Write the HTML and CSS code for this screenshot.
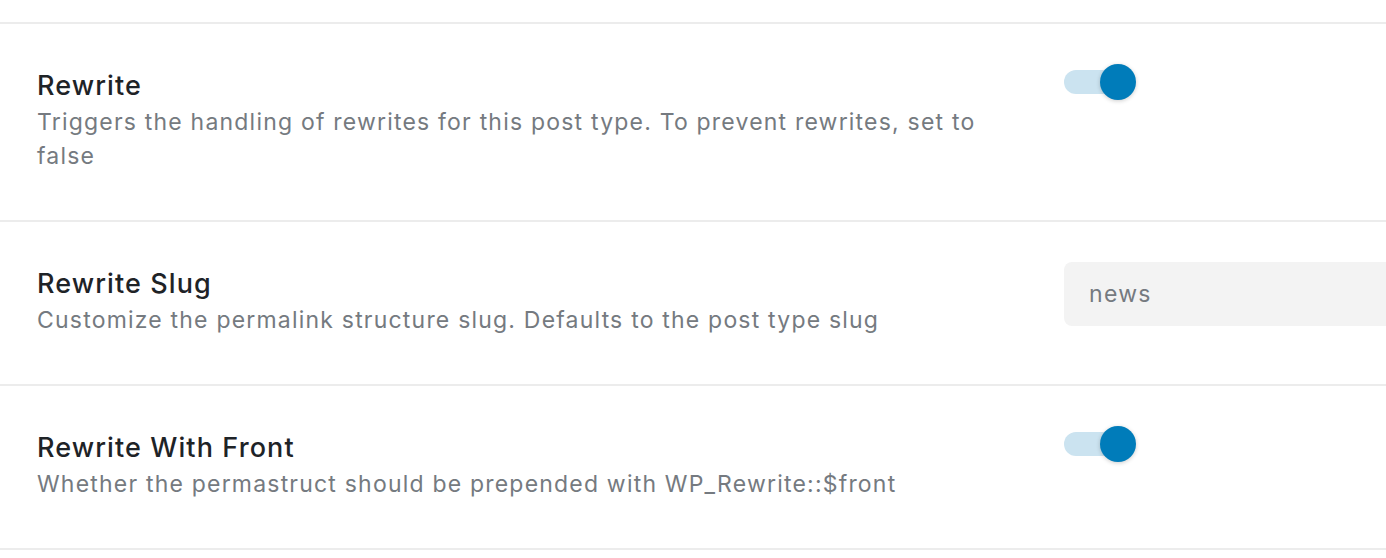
FILE: index.html
```html
<!DOCTYPE html>
<html lang="en">
<head>
    <meta charset="UTF-8">
    <meta name="viewport" content="width=device-width, initial-scale=1.0">
    <title>Post Type Settings</title>
    <link rel="stylesheet" href="styles.css">
</head>
<body>
    <div class="settings">
        <div class="row row-top"></div>
        <div class="row">
            <div class="info">
                <h3 class="title">Rewrite</h3>
                <p class="desc">Triggers the handling of rewrites for this post type. To prevent rewrites, set to false</p>
            </div>
            <div class="control">
                <label class="toggle">
                    <input type="checkbox" checked aria-label="Rewrite">
                    <span class="track"></span>
                    <span class="knob"></span>
                </label>
            </div>
        </div>
        <div class="row">
            <div class="info">
                <h3 class="title">Rewrite Slug</h3>
                <p class="desc">Customize the permalink structure slug. Defaults to the post type slug</p>
            </div>
            <div class="control">
                <input type="text" class="text-input" value="news" aria-label="Rewrite Slug">
            </div>
        </div>
        <div class="row">
            <div class="info">
                <h3 class="title">Rewrite With Front</h3>
                <p class="desc">Whether the permastruct should be prepended with WP_Rewrite::$front</p>
            </div>
            <div class="control">
                <label class="toggle">
                    <input type="checkbox" checked aria-label="Rewrite With Front">
                    <span class="track"></span>
                    <span class="knob"></span>
                </label>
            </div>
        </div>
    </div>
</body>
</html>
```

FILE: styles.css
```css
body {
    margin: 0;
    padding: 0;
    background: #fff;
    font-family: 'Inter', 'Noto Sans', sans-serif;
    overflow: hidden;
}
.settings {
    width: 1600px;
}
.row {
    display: flex;
    align-items: flex-start;
    padding: 44px 0 47px 37px;
    border-bottom: 2px solid #ececec;
}
.row-top {
    height: 22px;
    padding: 0;
}
.info {
    width: 980px;
    flex-shrink: 0;
}
.title {
    margin: 0;
    font-size: 27px;
    line-height: 36px;
    font-weight: 500;
    letter-spacing: 1.1px;
    color: #1e2327;
}
.desc {
    margin: 1px 0 0;
    font-size: 23px;
    line-height: 34px;
    letter-spacing: 1.2px;
    color: #757a80;
}
.control {
    margin-left: 47px;
    width: 420px;
}
.toggle {
    position: relative;
    display: block;
    width: 72px;
    height: 36px;
    margin-top: -4px;
    cursor: pointer;
}
.toggle input {
    position: absolute;
    opacity: 0;
    margin: 0;
}
.track {
    position: absolute;
    left: 0;
    top: 6px;
    width: 64px;
    height: 24px;
    border-radius: 12px;
    background: #cbe3f0;
}
.knob {
    position: absolute;
    left: 36px;
    top: 0;
    width: 36px;
    height: 36px;
    border-radius: 50%;
    background: #007cba;
    box-shadow: 0 1px 4px rgba(0, 0, 0, 0.2);
}
.text-input {
    display: block;
    width: 100%;
    height: 64px;
    box-sizing: border-box;
    padding: 0 25px;
    border: none;
    border-radius: 8px;
    background: #f3f3f3;
    font-family: 'Inter', 'Noto Sans', sans-serif;
    font-size: 23px;
    letter-spacing: 1.3px;
    color: #757a80;
    outline: none;
    margin-top: -4px;
}
```
